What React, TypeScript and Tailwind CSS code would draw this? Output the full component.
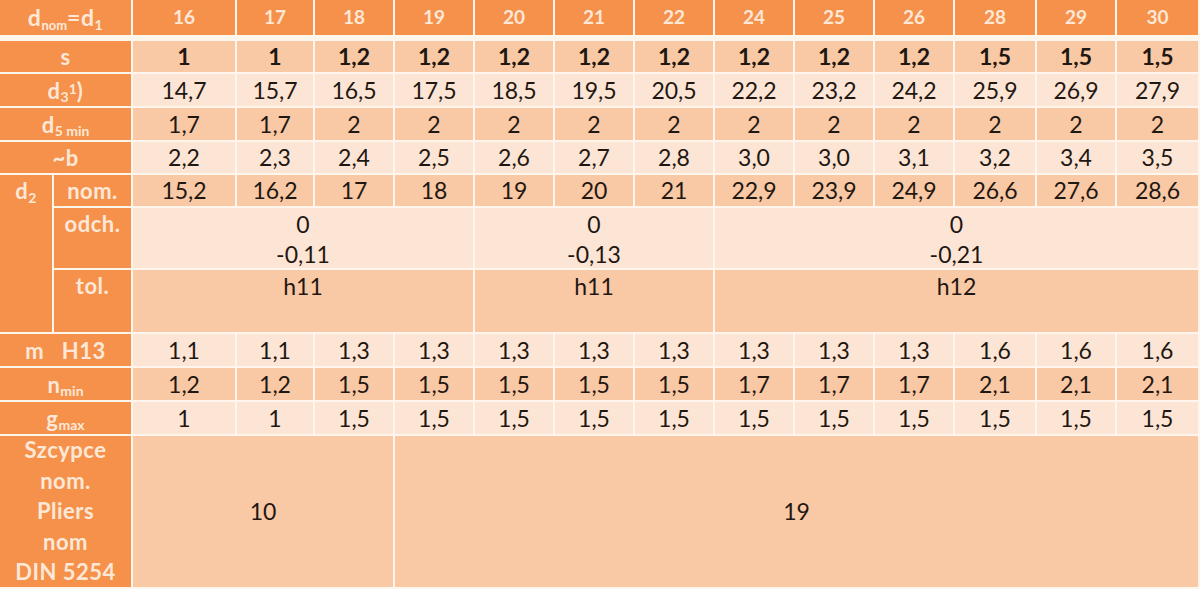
import React from 'react'

const cols = 'grid-cols-[52px_77px_102px_76px_repeat(8,78px)_80px_78px_81px]'
const heads = ['16', '17', '18', '19', '20', '21', '22', '24', '25', '26', '28', '29', '30']

const dark = 'bg-[#f9c8a4]'
const light = 'bg-[#fde5d5]'

type Row = { label: React.ReactNode; values: string[]; tone: string; bold?: boolean }

const topRows: Row[] = [
  { label: 's', values: ['1', '1', '1,2', '1,2', '1,2', '1,2', '1,2', '1,2', '1,2', '1,2', '1,5', '1,5', '1,5'], tone: dark, bold: true },
  {
    label: (
      <span>
        d<sub className="text-[14px] tracking-normal">3</sub>
        <sup className="text-[14px] tracking-normal top-[-0.3em]">1</sup>)
      </span>
    ),
    values: ['14,7', '15,7', '16,5', '17,5', '18,5', '19,5', '20,5', '22,2', '23,2', '24,2', '25,9', '26,9', '27,9'],
    tone: light,
  },
  {
    label: (
      <span>
        d<sub className="text-[14px] tracking-normal">5 min</sub>
      </span>
    ),
    values: ['1,7', '1,7', '2', '2', '2', '2', '2', '2', '2', '2', '2', '2', '2'],
    tone: dark,
  },
  { label: '~b', values: ['2,2', '2,3', '2,4', '2,5', '2,6', '2,7', '2,8', '3,0', '3,0', '3,1', '3,2', '3,4', '3,5'], tone: light },
]

const bottomRows: Row[] = [
  { label: <span className="whitespace-pre">m   H13</span>, values: ['1,1', '1,1', '1,3', '1,3', '1,3', '1,3', '1,3', '1,3', '1,3', '1,3', '1,6', '1,6', '1,6'], tone: light },
  {
    label: (
      <span>
        n<sub className="text-[14px] tracking-normal">min</sub>
      </span>
    ),
    values: ['1,2', '1,2', '1,5', '1,5', '1,5', '1,5', '1,5', '1,7', '1,7', '1,7', '2,1', '2,1', '2,1'],
    tone: dark,
  },
  {
    label: (
      <span>
        g<sub className="text-[14px] tracking-normal">max</sub>
      </span>
    ),
    values: ['1', '1', '1,5', '1,5', '1,5', '1,5', '1,5', '1,5', '1,5', '1,5', '1,5', '1,5', '1,5'],
    tone: light,
  },
]

const orange = 'bg-[#f5914b] text-[#fde8d8] font-bold text-[22px] tracking-[0.5px]'
const labelCell = `${orange} flex items-center justify-center`

function DataRow({ row }: { row: Row }) {
  return (
    <>
      <div className={`col-span-2 ${labelCell}`}>{row.label}</div>
      {row.values.map((v, i) => (
        <div key={i} className={`${row.tone} flex items-center justify-center ${row.bold ? 'font-bold' : ''}`}>
          {v}
        </div>
      ))}
    </>
  )
}

export default function App() {
  return (
    <div
      className="w-[1200px] h-[589px] bg-[#fef5ec] flex flex-col gap-[6px] pr-[2px] text-[#1f1712] text-[23px] overflow-hidden"
      style={{ fontFamily: 'Lato, "Open Sans", sans-serif' }}
    >
      {/* header */}
      <div className={`grid ${cols} grid-rows-[35px] gap-x-[2px]`}>
        <div className={`col-span-2 ${labelCell} text-[23px]`}>
          <span>
            d<sub className="text-[13px] tracking-normal">nom</sub>=d<sub className="text-[14px]">1</sub>
          </span>
        </div>
        {heads.map((h) => (
          <div key={h} className="bg-[#f5914b] text-[#fde8d8] font-bold text-[19px] flex items-center justify-center">
            {h}
          </div>
        ))}
      </div>

      {/* body */}
      <div
        className={`grid ${cols} grid-rows-[31px_32px_32px_31px_31px_60px_62px_32px_32px_32px_151px] gap-[2px]`}
      >
        {topRows.map((r, i) => (
          <DataRow key={i} row={r} />
        ))}

        {/* d2 block */}
        <div className={`row-span-3 ${orange} flex justify-center leading-[31px]`}>
          <span>
            d<sub className="text-[14px]">2</sub>
          </span>
        </div>
        <div className={labelCell}>nom.</div>
        {['15,2', '16,2', '17', '18', '19', '20', '21', '22,9', '23,9', '24,9', '26,6', '27,6', '28,6'].map((v, i) => (
          <div key={i} className={`${dark} flex items-center justify-center`}>
            {v}
          </div>
        ))}

        <div className={`${orange} text-center leading-[30px] pt-[1px]`}>odch.</div>
        <div className={`col-span-4 ${light} text-center leading-[30px] pt-[1px]`}>
          <div>0</div>
          <div>-0,11</div>
        </div>
        <div className={`col-span-3 ${light} text-center leading-[30px] pt-[1px]`}>
          <div>0</div>
          <div>-0,13</div>
        </div>
        <div className={`col-span-6 ${light} text-center leading-[30px] pt-[1px]`}>
          <div>0</div>
          <div>-0,21</div>
        </div>

        <div className={`${orange} text-center leading-[30px] pt-[1px]`}>tol.</div>
        <div className={`col-span-4 ${dark} text-center leading-[30px] pt-[1px]`}>h11</div>
        <div className={`col-span-3 ${dark} text-center leading-[30px] pt-[1px]`}>h11</div>
        <div className={`col-span-6 ${dark} text-center leading-[30px] pt-[1px]`}>h12</div>

        {bottomRows.map((r, i) => (
          <DataRow key={i} row={r} />
        ))}

        <div className={`col-span-2 ${orange} leading-[30.4px] flex flex-col items-center justify-center`}>
          <span>Szcypce</span>
          <span>nom.</span>
          <span>Pliers</span>
          <span>nom</span>
          <span>DIN 5254</span>
        </div>
        <div className={`col-span-3 ${dark} flex items-center justify-center`}>10</div>
        <div className={`col-span-10 ${dark} flex items-center justify-center`}>19</div>
      </div>
    </div>
  )
}
